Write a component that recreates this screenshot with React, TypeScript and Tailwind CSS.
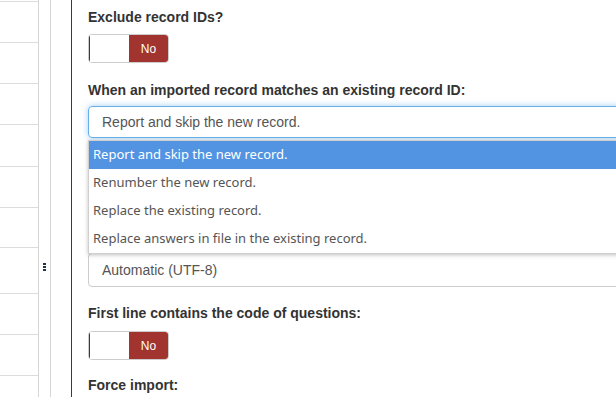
import React from 'react';

const rowHeights = [2, 41, 41, 41, 42, 41, 40, 46, 41, 41];

const options = [
  'Report and skip the new record.',
  'Renumber the new record.',
  'Replace the existing record.',
  'Replace answers in file in the existing record.',
];

const Toggle: React.FC = () => (
  <div className="flex h-[29px] w-[81px] overflow-hidden rounded-[4px] border border-[#cccccc]">
    <div className="w-[40px] border-l border-l-[#1f3f6b] bg-white" />
    <div className="flex flex-1 items-center justify-center bg-[#a1342e] text-[12px] text-white">No</div>
  </div>
);

const Label: React.FC<{ children: React.ReactNode; className?: string }> = ({ children, className }) => (
  <div className={`h-[20px] text-[14px] font-bold leading-[20px] text-[#333333] ${className ?? ''}`}>{children}</div>
);

export default function App() {
  return (
    <div className="flex h-[397px] w-[616px] overflow-hidden bg-white font-['Liberation_Sans',Arial,sans-serif]">
      {/* sidebar list */}
      <div className="h-full w-[39px] shrink-0 border-r border-[#d6d6d6]">
        {rowHeights.map((h, i) => (
          <div key={i} className="border-b border-[#dcdcdc]" style={{ height: h }} />
        ))}
      </div>

      {/* splitter */}
      <div className="relative h-full w-[12px] shrink-0 border-r border-[#d6d6d6]">
        <div className="absolute left-[4px] top-[263px] flex flex-col gap-[1px]">
          <span className="h-[2px] w-[3px] bg-[#1f3550]" />
          <span className="h-[2px] w-[3px] bg-[#1f3550]" />
          <span className="h-[2px] w-[3px] bg-[#1f3550]" />
        </div>
      </div>

      <div className="w-[20px] shrink-0" />

      {/* main panel */}
      <div className="relative h-full w-[700px] shrink-0 border-l border-[#1f3f6b] pl-[16px] pt-[7px]">
        <Label>Exclude record IDs?</Label>
        <div className="mt-[7px]">
          <Toggle />
        </div>

        <Label className="mt-[17px]">When an imported record matches an existing record ID:</Label>
        <div className="mt-[6px] flex h-[32px] items-center rounded-[4px] border border-[#66afe9] pl-[13px] text-[14px] text-[#555555] shadow-[0_0_6px_rgba(102,175,233,0.6)]">
          Report and skip the new record.
        </div>

        <div className="mt-[115px] flex h-[34px] items-center rounded-[4px] border border-[#cccccc] pl-[13px] text-[14px] text-[#555555]">
          Automatic (UTF-8)
        </div>

        <Label className="mt-[16px]">First line contains the code of questions:</Label>
        <div className="mt-[8px]">
          <Toggle />
        </div>

        <Label className="mt-[15px]">Force import:</Label>

        {/* open native dropdown */}
        <div className="absolute left-[16px] top-[140px] w-[640px] border border-[#cfcfcf] bg-white shadow-[0_1px_4px_rgba(0,0,0,0.25)] font-['Noto_Sans',sans-serif]">
          {options.map((o, i) => (
            <div
              key={o}
              className={`flex h-[28px] items-center pl-[4px] text-[13px] ${
                i === 0 ? 'bg-[#5294e2] text-white' : 'text-[#555555]'
              }`}
            >
              {o}
            </div>
          ))}
        </div>
      </div>
    </div>
  );
}
